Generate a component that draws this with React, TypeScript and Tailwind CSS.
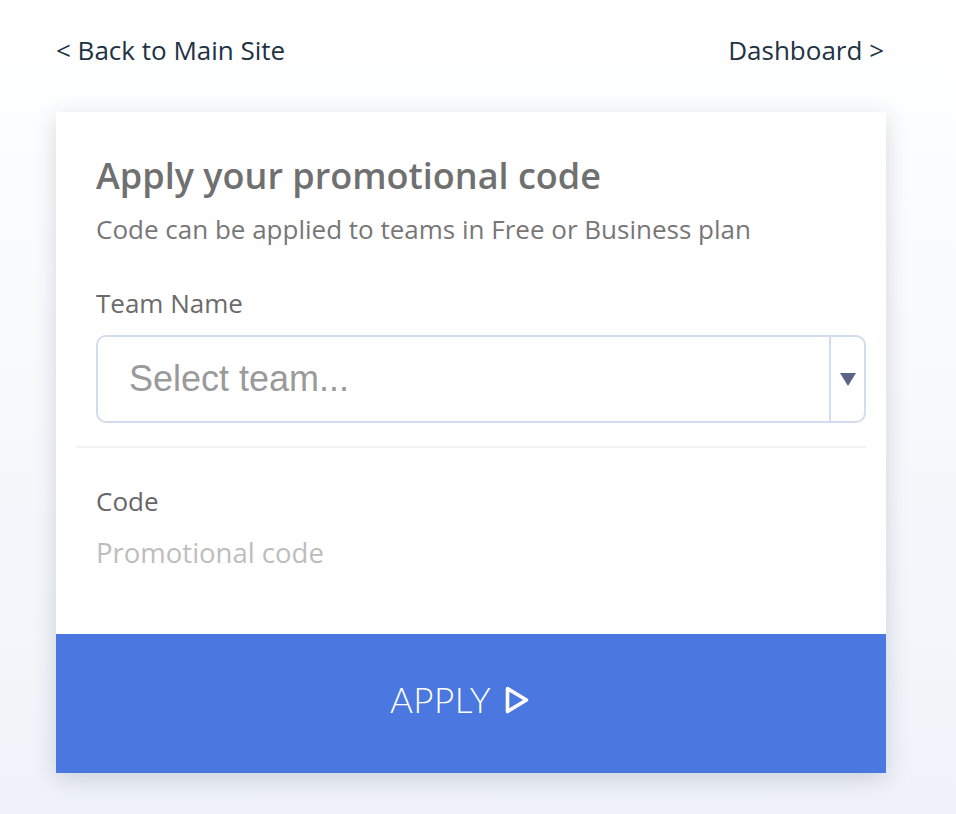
import React from "react";

const PlayIcon = () => (
  <svg width="26" height="30" viewBox="0 0 26 30" fill="none">
    <path
      d="M3.5 3.5 L22.5 15 L3.5 26.5 Z"
      stroke="white"
      strokeWidth="3.6"
      strokeLinejoin="round"
    />
  </svg>
);

export default function App() {
  return (
    <div
      className="min-h-screen bg-gradient-to-b from-white to-[#eff3f9] pb-[40px]"
      style={{ fontFamily: '"Open Sans", sans-serif' }}
    >
      <div className="ml-[56px] w-[830px]">
        <div className="flex items-center justify-between pt-[36px] pb-[48px] text-[26px] leading-[28px] text-[#1f3244]">
          <span>&lt; Back to Main Site</span>
          <span className="mr-[2px]">Dashboard &gt;</span>
        </div>

        <div className="bg-white shadow-[0_6px_22px_rgba(40,50,70,0.18)]">
          <div className="px-[20px] pt-[44px]">
            <div className="px-[20px]">
              <h1 className="text-[36px] font-semibold leading-[40px] text-[#707070]">
                Apply your promotional code
              </h1>
              <p className="mt-[18px] text-[26px] leading-[30px] text-[#777777]">
                Code can be applied to teams in Free or Business plan
              </p>
              <label className="mt-[44px] block text-[26px] leading-[30px] text-[#6b6b6b]">
                Team Name
              </label>
            </div>
            <div className="ml-[20px] mt-[17px] flex h-[88px] items-stretch rounded-[10px] border-2 border-[#d3dcee]">
              <div
                className="flex flex-1 items-center pl-[31px] text-[36px] text-[#9a9a9a]"
                style={{ fontFamily: '"Liberation Sans", Arial, sans-serif' }}
              >
                Select team...
              </div>
              <div className="flex w-[35px] items-center justify-center border-l-2 border-[#d3dcee]">
                <svg width="16" height="13" viewBox="0 0 16 13">
                  <path d="M0 0 H16 L8 13 Z" fill="#5b6485" />
                </svg>
              </div>
            </div>
            <div className="mt-[23px] h-[2px] bg-[#f2f2f2]" />
            <div className="px-[20px] pt-[38px] pb-[66px]">
              <label className="block text-[26px] leading-[30px] text-[#666666]">
                Code
              </label>
              <div className="mt-[22px] text-[27.5px] leading-[30px] text-[#bdbdbd]">
                Promotional code
              </div>
            </div>
          </div>
          <button className="flex h-[139px] w-full items-center justify-center gap-[13px] bg-[#4a77e0] pr-[22px] pb-[8px] text-white">
            <span
              className="text-[35px] font-light tracking-[0.5px]"
              style={{ fontFamily: "Lato, sans-serif" }}
            >
              APPLY
            </span>
            <PlayIcon />
          </button>
        </div>
      </div>
    </div>
  );
}
